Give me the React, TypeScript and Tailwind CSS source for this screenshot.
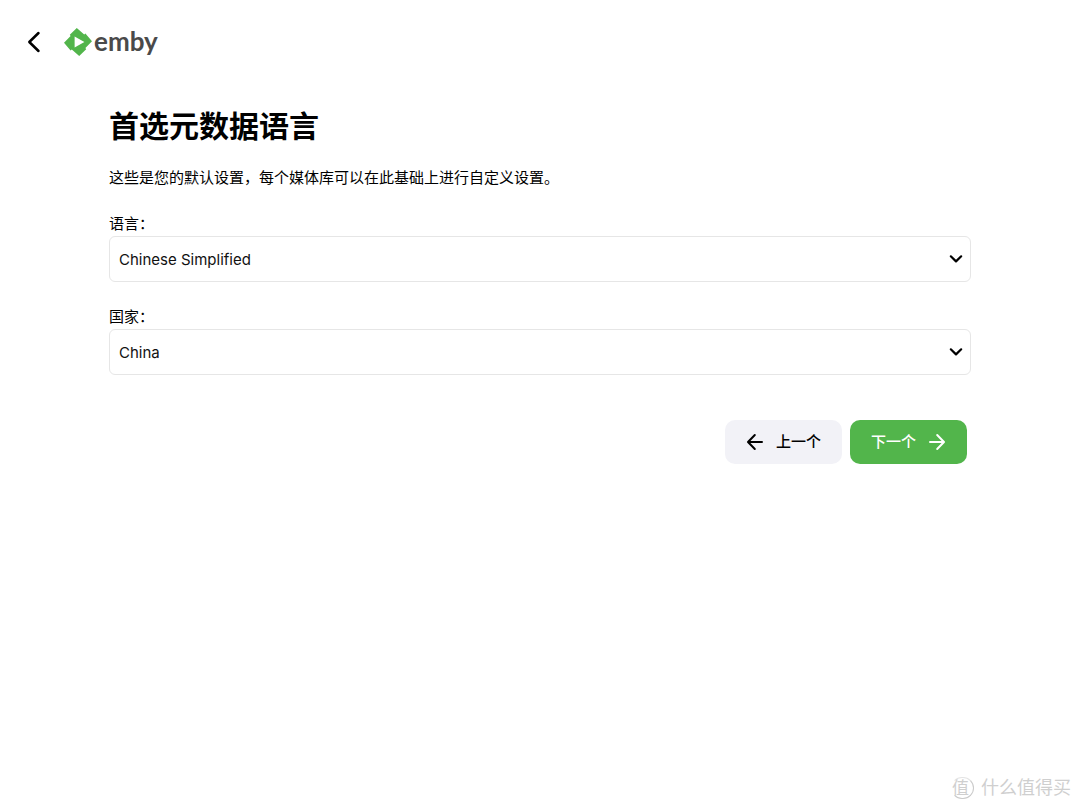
import type { ReactNode } from 'react';

function Field({ id, label, options }: { id: string; label: string; options: string[] }) {
  return (
    <div>
      <label htmlFor={id} className="block text-[15px] leading-6">
        {label}
      </label>
      <div className="grid items-center">
        <select
          id={id}
          className="col-start-1 row-start-1 h-[46px] w-full appearance-none rounded-md border border-[#e6e6e6] bg-white pt-[2px] pr-10 pl-[9px] text-[15px] text-[#111]"
        >
          {options.map((option) => (
            <option key={option}>{option}</option>
          ))}
        </select>
        <svg
          viewBox="0 0 14 10"
          className="pointer-events-none col-start-1 row-start-1 mr-2 h-[10px] w-[14px] justify-self-end"
          fill="none"
          stroke="#000"
          strokeWidth="2.2"
          strokeLinecap="round"
          strokeLinejoin="round"
          aria-hidden="true"
        >
          <path d="M1.8 2.3 7 7.4l5.2-5.1" />
        </svg>
      </div>
    </div>
  );
}

function Arrow({ d }: { d: string }) {
  return (
    <svg
      viewBox="0 0 18 18"
      className="size-[18px]"
      fill="none"
      stroke="currentColor"
      strokeWidth="2"
      strokeLinecap="round"
      strokeLinejoin="round"
      aria-hidden="true"
    >
      <path d={d} />
    </svg>
  );
}

function WizardButton({ className, children }: { className: string; children: ReactNode }) {
  return (
    <button
      type="button"
      className={`flex h-11 w-[117px] items-center justify-center gap-3 rounded-[10px] text-[15px] font-medium ${className}`}
    >
      {children}
    </button>
  );
}

function Logo() {
  return (
    <a href="#" className="flex items-center gap-[2px]" aria-label="emby">
      <svg viewBox="0 0 28 28" className="size-7" aria-hidden="true">
        <path
          fill="#52b54b"
          d="M12.8 0 20.2 6.4 21.4 5.6 28 13.2 21.4 20.1 22.2 21.3 15.2 28 7.8 21.6 6.6 22.4 0 14.8 6.6 7.9 5.8 6.7Z"
        />
        <path fill="#fff" d="M10.6 8.6v10.8l9.8-5.4Z" />
      </svg>
      <span className="pb-[2px] font-['Lato','Liberation_Sans',sans-serif] text-[26px] leading-7 font-bold text-[#4a4a4a]">
        emby
      </span>
    </a>
  );
}

export default function App() {
  return (
    <div className="flex min-h-screen flex-col bg-white font-['Inter','Noto_Sans_CJK_SC',sans-serif] text-black">
      <header className="flex h-[84px] items-center gap-5 pl-6">
        <button type="button" aria-label="返回" className="flex size-5 items-center justify-center">
          <svg
            viewBox="0 0 20 24"
            className="h-6 w-5 shrink-0"
            fill="none"
            stroke="#000"
            strokeWidth="2.5"
            strokeLinecap="round"
            strokeLinejoin="round"
            aria-hidden="true"
          >
            <path d="M14.5 3 5.3 12l9.2 9" />
          </svg>
        </button>
        <Logo />
      </header>

      <main className="mx-auto w-4/5 max-w-[862px] flex-1 pt-5">
        <h1 className="text-[30px] leading-[44px] font-bold">首选元数据语言</h1>
        <p className="mt-[18px] text-[15px] leading-6">
          这些是您的默认设置，每个媒体库可以在此基础上进行自定义设置。
        </p>
        <form className="mt-[22px] flex flex-col gap-[23px]">
          <Field id="language" label="语言：" options={['Chinese Simplified', 'English']} />
          <Field id="country" label="国家：" options={['China', 'United States']} />
          <div className="mt-[22px] flex justify-end gap-2 pr-1">
            <WizardButton className="bg-[#f2f2f7] text-black">
              <Arrow d="M16 9H2.2M8.8 2 2 9l6.8 7" />
              上一个
            </WizardButton>
            <WizardButton className="bg-[#52b54b] text-white">
              下一个
              <Arrow d="M2 9h13.8M9.2 2 16 9l-6.8 7" />
            </WizardButton>
          </div>
        </form>
      </main>

      <footer className="flex h-11 items-center justify-end gap-[7px] pr-[9px] text-[#cfcfcf]">
        <span className="flex h-[22px] w-[23px] items-center justify-start rounded-full border border-l-transparent border-t-[#e4e4e4] border-r-[#cacaca] border-b-[#cacaca] text-[17px] leading-none">
          值
        </span>
        <span className="text-[18px] leading-none">什么值得买</span>
      </footer>
    </div>
  );
}
